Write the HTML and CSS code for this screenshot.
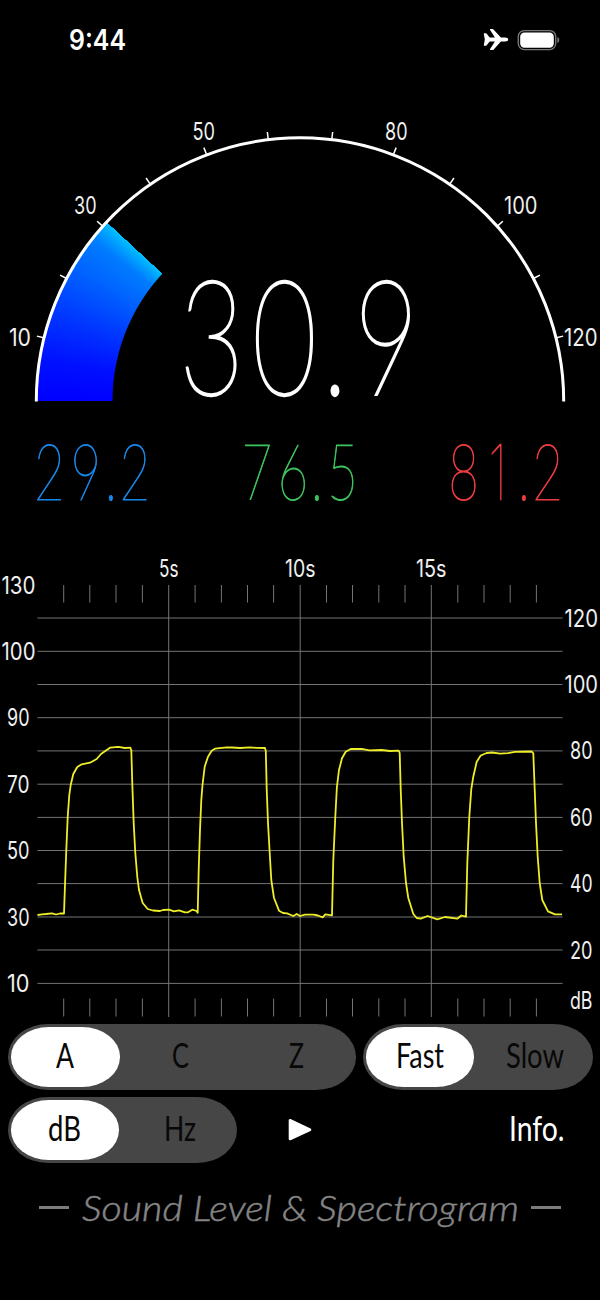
FILE: index.html
```html
<!DOCTYPE html>
<html lang="en">
<head>
<meta charset="utf-8">
<title>Sound Level &amp; Spectrogram</title>
<link rel="stylesheet" href="styles.css">
</head>
<body>
<main class="screen">
  <header class="status">
    <svg class="clock" width="60" height="40" viewBox="68 20 60 40"><text x="69" y="50" textLength="57" lengthAdjust="spacingAndGlyphs">9:44</text></svg>
    <div class="status-icons">
      <svg width="26" height="24" viewBox="483 29 26 24"><path fill="#fff" d="M484.2 34.200h1.600q.6 0 .9.500l3 3.800h5.200l-4.800-7.400q-.6-1 .5-1h1.900q.7 0 1.200.600l7.200 7.800h4q3.300.200 3.300 2t-3.300 2h-4l-7.200 8q-.5.600-1.200.600h-1.900q-1.100 0-.5-1l4.800-7.600h-5.200l-3 3.800q-.3.500-.9.500h-1.600q-.5 0-.4-.600l1-5.700-1-5.700q-.1-.6.4-.6z"/></svg>
      <svg width="43" height="24" viewBox="517 28 43 24"><rect x="518.300" y="30.600" width="37.400" height="19" rx="6" fill="none" stroke="#77777a" stroke-width="1.400"/><rect x="520.200" y="32.500" width="33.600" height="15.200" rx="4.200" fill="#fff"/><path d="M557.300 37q2 .6 2 3t-2 3z" fill="#77777a"/></svg>
    </div>
  </header>

  <section class="gauge">
    <div class="gauge-fill"></div>
    <svg class="gauge-dial" width="600" height="340" viewBox="0 80 600 340">
      <path class="arc" d="M36.300 401.500V401a263.700 263.200 0 0 1 527.400 0v.5"/>
      <g class="dial-tick">
        <path d="M29 401h8" transform="rotate(13.850 300 401)"/>
        <path d="M29 401h8" transform="rotate(27.690 300 401)"/>
        <path d="M29 401h8" transform="rotate(41.540 300 401)"/>
        <path d="M29 401h8" transform="rotate(55.380 300 401)"/>
        <path d="M29 401h8" transform="rotate(69.230 300 401)"/>
        <path d="M29 401h8" transform="rotate(83.080 300 401)"/>
        <path d="M29 401h8" transform="rotate(96.920 300 401)"/>
        <path d="M29 401h8" transform="rotate(110.770 300 401)"/>
        <path d="M29 401h8" transform="rotate(124.620 300 401)"/>
        <path d="M29 401h8" transform="rotate(138.460 300 401)"/>
        <path d="M29 401h8" transform="rotate(152.310 300 401)"/>
        <path d="M29 401h8" transform="rotate(166.150 300 401)"/>
      </g>
      <g class="axis">
        <text x="9" y="345.500" textLength="22" lengthAdjust="spacingAndGlyphs">10</text>
        <text x="74" y="213.500" textLength="22.500" lengthAdjust="spacingAndGlyphs">30</text>
        <text x="192.500" y="139.500" textLength="22.500" lengthAdjust="spacingAndGlyphs">50</text>
        <text x="385" y="139.500" textLength="22.500" lengthAdjust="spacingAndGlyphs">80</text>
        <text x="504" y="213.500" textLength="33.500" lengthAdjust="spacingAndGlyphs">100</text>
        <text x="564" y="345.500" textLength="33.500" lengthAdjust="spacingAndGlyphs">120</text>
      </g>
      <text class="level" transform="scale(.7 1)" x="302.500 406.500 478.500 552" y="395.500">30.9</text>
    </svg>
  </section>

  <svg class="readouts" width="600" height="130" viewBox="0 420 600 130">
    <g transform="scale(.67 1)">
      <text class="min" x="73.500 128 165.700 201.300" y="500.500">29.2</text>
      <text class="avg" x="383.200 437 473.100 511.500" y="500.500">76.5</text>
      <text class="max" x="692 743 782.100 817.300" y="500.500">8<tspan class="one">1</tspan>.2</text>
    </g>
  </svg>

  <svg class="chart" width="600" height="474" viewBox="0 550 600 474">
    <path class="grid" d="M37.500 618h525M37.500 651.300h525M37.500 684.500h525M37.500 717.700h525M37.500 750.900h525M37.500 784.200h525M37.500 817.400h525M37.500 850.500h525M37.500 883.600h525M37.500 917h525M37.500 950h525M37.500 983.400h525"/>
    <path class="grid" d="M168.700 585v432M300.200 585v432M431.300 585v432"/>
    <path class="grid" d="M63.700 585v17.500m0 396v18M89.800 585v17.500m0 396v18M116 585v17.500m0 396v18M142.400 585v17.500m0 396v18M195.100 585v17.500m0 396v18M221.400 585v17.500m0 396v18M247.500 585v17.500m0 396v18M273.600 585v17.500m0 396v18M326.500 585v17.500m0 396v18M352.500 585v17.500m0 396v18M378.800 585v17.500m0 396v18M405 585v17.500m0 396v18M457.800 585v17.500m0 396v18M484 585v17.500m0 396v18M510.200 585v17.500m0 396v18M536.400 585v17.500m0 396v18"/>
    <polyline class="trace" points="37.500,915 42,914.300 46,914 52,913.300 56,914.500 60,913.500 64,913.500 65,885 66.300,850 67.700,817 69.300,795 70.700,785 73.300,774 77.300,767 81.700,764.300 90,762.700 96.700,759 101,754 106.700,750 110,747.700 118.300,746.900 125,748 130.300,747.700 131.300,750 132.300,784 133.700,823 135.300,853 137.300,877 139,890 142.700,903 147.700,909 153,910.500 160,911 163,910 169,909.700 174,911.300 179,910.300 185,912.300 188,912.300 192.300,909.700 196.500,911 197.700,912.700 198.700,870 200,830 201.300,800 202.500,785 204.700,766.700 208,756.700 211.700,750.700 215,748.700 226.700,747.300 232,747.500 240,748 250,747.300 257,747.900 265,748 265.800,751 266.700,789 268,823 269.700,853 271.300,880 274,898 279,910.700 283,913 287,913.300 293.300,916 296.700,914 300,916 305,914.700 313.300,914.700 318,915.500 322.700,917.300 325.300,914.300 332,915.300 333.300,860 335.300,816.700 336.900,787 339,770 342,758.300 345.700,751.700 350.700,749 361.700,748.900 369.300,750.300 381.700,750 390,751 398.700,750.700 399.700,753 400.700,789 402,823 403.700,856.700 406,883 408.300,898 413.300,914 416.700,918 420.700,918.700 427.700,916 437.300,919.300 445,917 457.300,918.700 461.300,915.500 466,916.700 467.300,863 469.300,816.700 471.300,789 473.300,776.700 476.700,761.700 480.700,755.500 486.700,753 492,752.500 500,753.700 508,753.200 515,751.900 531.700,751.500 533.300,753.300 534.700,789 536,823 537.700,856.700 539.700,883 542.300,900 548,911.300 555,914.300 562,914.300"/>
    <g class="axis">
      <text x="159" y="577" textLength="19.500" lengthAdjust="spacingAndGlyphs">5s</text>
      <text x="285" y="577" textLength="30.500" lengthAdjust="spacingAndGlyphs">10s</text>
      <text x="416" y="577" textLength="30.500" lengthAdjust="spacingAndGlyphs">15s</text>
      <text x="1.500" y="593.500" textLength="34" lengthAdjust="spacingAndGlyphs">130</text>
      <text x="1.500" y="659.800" textLength="34" lengthAdjust="spacingAndGlyphs">100</text>
      <text x="7" y="726" textLength="22.500" lengthAdjust="spacingAndGlyphs">90</text>
      <text x="7" y="792.500" textLength="22.500" lengthAdjust="spacingAndGlyphs">70</text>
      <text x="7" y="859" textLength="22.500" lengthAdjust="spacingAndGlyphs">50</text>
      <text x="7" y="925.500" textLength="22.500" lengthAdjust="spacingAndGlyphs">30</text>
      <text x="7" y="991.800" textLength="22.500" lengthAdjust="spacingAndGlyphs">10</text>
      <text x="564.500" y="626.500" textLength="33.500" lengthAdjust="spacingAndGlyphs">120</text>
      <text x="564.500" y="693" textLength="33.500" lengthAdjust="spacingAndGlyphs">100</text>
      <text x="570" y="759.400" textLength="22.500" lengthAdjust="spacingAndGlyphs">80</text>
      <text x="570" y="825.800" textLength="22.500" lengthAdjust="spacingAndGlyphs">60</text>
      <text x="570" y="892" textLength="22.500" lengthAdjust="spacingAndGlyphs">40</text>
      <text x="570" y="958.500" textLength="22.500" lengthAdjust="spacingAndGlyphs">20</text>
      <text x="570" y="1008.500" textLength="22.500" lengthAdjust="spacingAndGlyphs">dB</text>
    </g>
  </svg>

  <nav class="controls">
    <div class="row">
      <div class="segments weighting">
        <button class="segment selected"><svg class="label" width="18" height="48"><text x="0" y="35" textLength="18" lengthAdjust="spacingAndGlyphs">A</text></svg></button>
        <button class="segment"><svg class="label" width="17" height="48"><text x="0" y="35" textLength="17" lengthAdjust="spacingAndGlyphs">C</text></svg></button>
        <button class="segment"><svg class="label" width="15" height="48"><text x="0" y="35" textLength="15" lengthAdjust="spacingAndGlyphs">Z</text></svg></button>
      </div>
      <div class="segments speed">
        <button class="segment selected"><svg class="label" width="48" height="48"><text x="0" y="35" textLength="48" lengthAdjust="spacingAndGlyphs">Fast</text></svg></button>
        <button class="segment"><svg class="label" width="58" height="48"><text x="0" y="35" textLength="58" lengthAdjust="spacingAndGlyphs">Slow</text></svg></button>
      </div>
    </div>
    <div class="row">
      <div class="segments mode">
        <button class="segment selected"><svg class="label" width="35" height="48"><text x="1" y="35" textLength="33" lengthAdjust="spacingAndGlyphs">dB</text></svg></button>
        <button class="segment"><svg class="label" width="32" height="48"><text x="0" y="35" textLength="32" lengthAdjust="spacingAndGlyphs">Hz</text></svg></button>
      </div>
      <button class="play"><svg width="24" height="24" viewBox="288 1118 24 24"><path d="M290 1120.300v18.700L310 1129.700z" fill="#fff" stroke="#fff" stroke-width="2.600" stroke-linejoin="round"/></svg></button>
      <button class="info"><svg class="label" width="58" height="48"><text x="0" y="35" textLength="55.500" lengthAdjust="spacingAndGlyphs">Info.</text></svg></button>
    </div>
  </nav>

  <footer class="title">
    <span class="dash"></span>
    <svg class="name" width="442" height="48" viewBox="0 0 442 48"><text x="2" y="34" textLength="437" lengthAdjust="spacingAndGlyphs">Sound Level &amp; Spectrogram</text></svg>
    <span class="dash"></span>
  </footer>
</main>
</body>
</html>
```

FILE: styles.css
```css
* { box-sizing: border-box; }
body { margin: 0; background: #000; }
svg { display: block; flex: none; overflow: visible; }
button { border: 0; padding: 0; margin: 0; background: none; }

.screen {
  width: 600px;
  height: 1300px;
  background: #000;
  display: flex;
  flex-direction: column;
  overflow: hidden;
}

.status {
  height: 80px;
  padding: 0 40px 0 68px;
  display: flex;
  justify-content: space-between;
  align-items: center;
}
.clock text { font: 600 28px Inter, sans-serif; fill: #fff; }
.status-icons { display: flex; align-items: center; gap: 8px; }

.gauge { display: grid; height: 340px; }
.gauge > * { grid-area: 1 / 1; }
.gauge-dial { z-index: 1; }
.gauge-fill {
  width: 600px;
  height: 321px;
  background: conic-gradient(from 270deg at 300px 321px,
    #0000ff 0deg, #0010ff 9deg, #0038ff 20deg, #0064ff 31deg,
    #007cff 38deg, #00a4ff 41deg, #00c0ff 42.780deg, transparent 42.800deg);
  -webkit-mask: radial-gradient(circle at 300px 321px, transparent 187px, #000 188px, #000 263px, transparent 264px);
  mask: radial-gradient(circle at 300px 321px, transparent 187px, #000 188px, #000 263px, transparent 264px);
}
.arc { fill: none; stroke: #fff; stroke-width: 3; }
.dial-tick { fill: none; stroke: #fff; stroke-width: 1.500; }

.axis text { font: 400 24px Inter, sans-serif; fill: #f0f0f0; }

.level {
  font: 100 160px Lato, sans-serif;
  fill: #fff;
  stroke: #fff;
  stroke-width: 2.300;
  text-anchor: middle;
}
.readouts text { font: 100 79px Lato, sans-serif; text-anchor: middle; stroke-width: 1; }
.readouts .one { font: 100 77px Inter, sans-serif; stroke-width: .300; }
.min { fill: #1787e8; stroke: #1787e8; }
.avg { fill: #3cc25c; stroke: #3cc25c; }
.max { fill: #ee3c40; stroke: #ee3c40; }

.grid { fill: none; stroke: #747474; stroke-width: 1; }
.trace { fill: none; stroke: #eeee28; stroke-width: 1.800; stroke-linejoin: round; }

.controls {
  display: flex;
  flex-direction: column;
  gap: 7.500px;
  padding: 0 7px 0 8px;
}
.row { display: flex; align-items: center; height: 65.500px; }
.segments {
  display: flex;
  height: 65.500px;
  padding: 3px 2.500px;
  background: #464646;
  border-radius: 40px / 50%;
}
.weighting { width: 347.500px; margin-right: 7.500px; }
.speed { width: 230px; }
.mode { width: 229px; }
.segment {
  flex: 1;
  display: flex;
  justify-content: center;
  align-items: center;
  border-radius: 38px / 50%;
}
.segment + .segment { padding-left: 6px; }
.weighting .segment { flex: none; width: 109px; }
.weighting .segment + .segment { width: 116px; }
.speed .segment.selected, .mode .segment.selected { flex: none; width: 108px; }
.segment.selected { background: #fff; }
.label text { font: 400 35px Lato, sans-serif; fill: #080808; }
.play { margin-left: 51px; }
.info { margin-left: auto; padding-right: 26px; }
.info .label text { fill: #fff; }

.title {
  margin-top: 24px;
  height: 48px;
  padding-left: 39px;
  display: flex;
  align-items: center;
}
.dash { width: 30px; height: 3px; margin-bottom: 7px; background: #7c7c7c; flex: none; }
.name { margin: 0 9px 0 11px; }
.name text { font: italic 300 35px Lato, sans-serif; fill: #858585; stroke: #858585; stroke-width: .500; }
```
